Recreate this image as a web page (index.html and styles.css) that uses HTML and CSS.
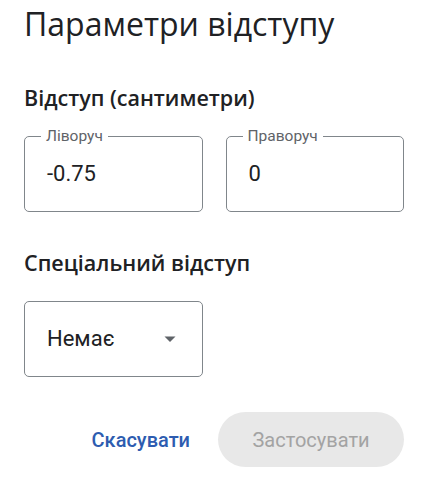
FILE: index.html
```html
<!DOCTYPE html>
<html lang="uk">
<head>
<meta charset="utf-8">
<title>Параметри відступу</title>
<link rel="stylesheet" href="styles.css">
</head>
<body>
<div class="dialog">
  <h1 class="title">Параметри відступу</h1>
  <h2 class="section">Відступ (сантиметри)</h2>
  <div class="fields">
    <fieldset class="field">
      <legend class="field-label">Ліворуч</legend>
      <div class="field-value">-0.75</div>
    </fieldset>
    <fieldset class="field">
      <legend class="field-label">Праворуч</legend>
      <div class="field-value">0</div>
    </fieldset>
  </div>
  <h2 class="section section-special">Спеціальний відступ</h2>
  <div class="select">
    <span class="select-value">Немає</span>
    <svg class="select-arrow" width="12" height="6" viewBox="0 0 12 6"><path d="M0.5 0.5 L11.5 0.5 L6 6 Z" fill="#5f6368"/></svg>
  </div>
  <div class="actions">
    <button class="btn btn-text">Скасувати</button>
    <button class="btn btn-filled" disabled>Застосувати</button>
  </div>
</div>
</body>
</html>
```
FILE: styles.css
```css
html, body {
  margin: 0;
  padding: 0;
  background: #ffffff;
}
body {
  font-family: Roboto, "Liberation Sans", sans-serif;
  color: #202124;
}
.dialog {
  width: 423px;
  box-sizing: border-box;
  padding: 0 19px 0 24px;
}
.title {
  margin: 0;
  padding-top: 4px;
  font-family: "Open Sans", sans-serif;
  font-weight: 400;
  font-size: 32px;
  line-height: 40px;
  color: #202124;
}
.section {
  margin: 0;
  font-family: "Open Sans", sans-serif;
  font-weight: 600;
  font-size: 21.5px;
  line-height: 28px;
  color: #202124;
}
.title + .section {
  margin-top: 40px;
}
.fields {
  display: flex;
  gap: 23px;
  margin-top: 16px;
}
.field {
  margin: 0;
  padding: 0 0 0 16px;
  width: 179px;
  height: 84px;
  box-sizing: border-box;
  border: 1px solid #80868b;
  border-radius: 5px;
}
.field-label {
  padding: 0 5px;
  font-size: 15.5px;
  line-height: 16px;
  color: #5f6368;
}
.field-value {
  padding: 16px 0 0 6px;
  font-size: 22px;
  line-height: 28px;
  color: #202124;
}
.section-special {
  margin-top: 37px;
}
.select {
  margin-top: 24px;
  width: 179px;
  height: 76px;
  box-sizing: border-box;
  border: 1px solid #80868b;
  border-radius: 5px;
  display: flex;
  align-items: center;
  justify-content: space-between;
  padding: 0 26px 0 22px;
}
.select-value {
  font-size: 22px;
  line-height: 28px;
}
.select-arrow {
  display: block;
}
.actions {
  display: flex;
  justify-content: flex-end;
  align-items: center;
  gap: 28px;
  margin-top: 35px;
}
.btn {
  font-family: Roboto, "Liberation Sans", sans-serif;
  font-weight: 500;
  font-size: 20px;
  border: none;
  background: none;
  padding: 0;
  cursor: pointer;
}
.btn-text {
  color: #2d5cb0;
}
.btn-filled {
  width: 186px;
  height: 55px;
  border-radius: 28px;
  background: #e8e8e8;
  color: #a3a3a3;
  font-weight: 400;
}
```
